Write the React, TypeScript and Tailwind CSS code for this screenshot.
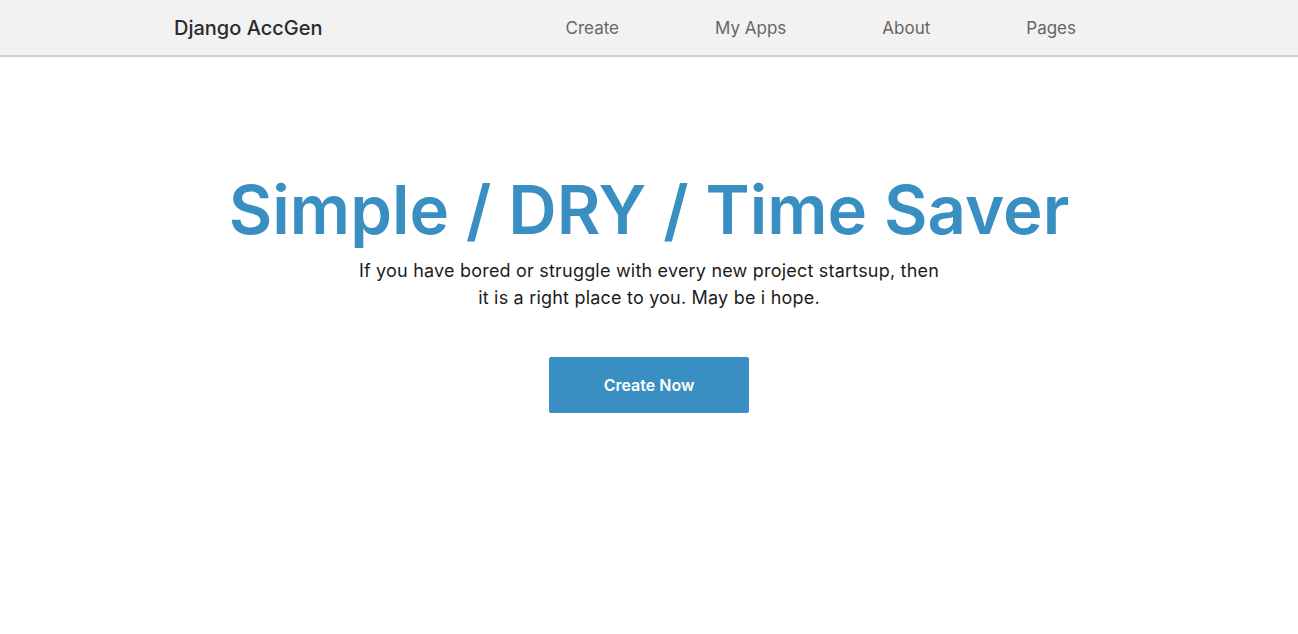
export default function App() {
  return (
    <div className="min-h-screen bg-white font-['Inter',_'Noto_Sans',_sans-serif]">
      <header className="h-[57px] border-b-2 border-[#cfcfcf] bg-[#f2f2f2]">
        <div className="mx-auto flex h-full w-[950px] items-center justify-between">
          <a href="#" className="text-[20px] font-medium text-[#2b2b2b]">
            Django AccGen
          </a>
          <nav className="flex items-center pt-[2px]">
            <a href="#" className="px-12 text-[17px] text-[#666666]">Create</a>
            <a href="#" className="px-12 text-[17px] text-[#666666]">My Apps</a>
            <a href="#" className="px-12 text-[17px] text-[#666666]">About</a>
            <a href="#" className="px-12 text-[17px] text-[#666666]">Pages</a>
          </nav>
        </div>
      </header>

      <main className="flex flex-col items-center pt-[110px] text-center">
        <h1 className="text-[67px] font-semibold leading-[86px] text-[#3a8fc2]">
          Simple / DRY / Time Saver
        </h1>
        <p className="mt-[4px] w-[590px] text-[18px] leading-[27px] tracking-[0.2px] text-[#1c1c1c]">
          If you have bored or struggle with every new project startsup, then it is a right place to you. May be i hope.
        </p>
        <button className="mt-[46px] h-[56px] w-[200px] rounded-[2px] bg-[#3a8fc2] text-[16px] font-semibold text-white">
          Create Now
        </button>
      </main>
    </div>
  );
}
